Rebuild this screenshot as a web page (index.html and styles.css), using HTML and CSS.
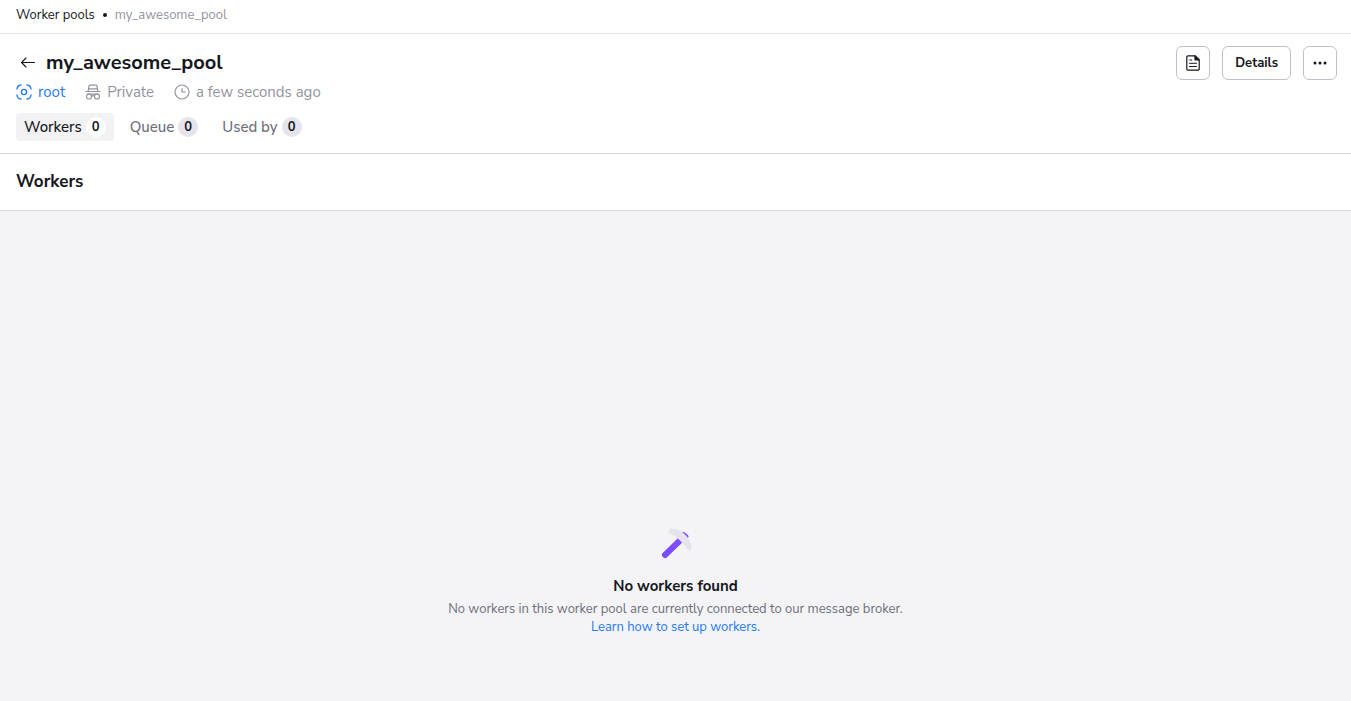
FILE: index.html
```html
<!DOCTYPE html>
<html lang="en">
<head>
    <meta charset="UTF-8">
    <meta name="viewport" content="width=device-width, initial-scale=1.0">
    <title>my_awesome_pool</title>
    <link rel="stylesheet" href="styles.css">
</head>
<body>

    <!-- Breadcrumbs -->
    <nav class="breadcrumbs" aria-label="Breadcrumbs">
        <a href="#">Worker pools</a>
        <span class="separator"></span>
        <span class="current">my_awesome_pool</span>
    </nav>

    <!-- Page header -->
    <header class="page-header">
        <div class="title-row">
            <a href="#" class="back-link" aria-label="Back">
                <svg width="16" height="12" viewBox="0 0 16 12" fill="none" stroke="currentColor" stroke-width="1.1" stroke-linecap="round" stroke-linejoin="round">
                    <path d="M14.500 5.500H1.500M6 1L1.500 5.500 6 10"/>
                </svg>
            </a>
            <h1>my_awesome_pool</h1>
            <div class="actions">
                <button type="button" class="btn btn-icon" aria-label="Documentation">
                    <svg width="14" height="16" viewBox="0 0 14 16" fill="none" stroke="currentColor" stroke-width="1.2" stroke-linejoin="round">
                        <path d="M8.500.8H2A1.200 1.200 0 0 0 .8 2v12A1.200 1.200 0 0 0 2 15.200h10a1.200 1.200 0 0 0 1.200-1.200V5.200z"/>
                        <path d="M9 .8v4h4.200z" fill="currentColor"/>
                        <path d="M3.800 5h2M3.500 8.300h7M3.500 11.500h7" stroke-width="1" stroke-linecap="round"/>
                    </svg>
                </button>
                <button type="button" class="btn">Details</button>
                <button type="button" class="btn btn-icon" aria-label="More actions">
                    <svg width="14" height="4" viewBox="0 0 14 4" fill="currentColor">
                        <circle cx="2" cy="2" r="1.500"/>
                        <circle cx="7" cy="2" r="1.500"/>
                        <circle cx="12" cy="2" r="1.500"/>
                    </svg>
                </button>
            </div>
        </div>

        <div class="meta">
            <a href="#" class="meta-item space-link">
                <svg width="16" height="16" viewBox="0 0 16 16" fill="none" stroke="currentColor" stroke-width="1.3" stroke-linecap="round">
                    <circle cx="8" cy="8" r="2.600"/>
                    <path d="M1 5C1.200 2.700 2.700 1.200 5 1M11 1C13.300 1.200 14.800 2.700 15 5M15 11C14.800 13.300 13.300 14.800 11 15M5 15C2.700 14.800 1.200 13.300 1 11"/>
                </svg>
                root
            </a>
            <span class="meta-item">
                <svg width="16" height="16" viewBox="0 0 16 16" fill="none" stroke="currentColor" stroke-width="1.2" stroke-linecap="round" stroke-linejoin="round">
                    <path d="M3.200 7.200L4 2.200Q4.200 1.200 5.200 1.200h5.600q1 0 1.200 1l.8 5M3.600 4.800h8.800M1 7.500h14"/>
                    <path d="M2.500 10.200h11"/>
                    <circle cx="4" cy="12.500" r="2.500"/>
                    <circle cx="12" cy="12.500" r="2.500"/>
                    <path d="M6.500 12.200q1.500-1 3 0"/>
                </svg>
                Private
            </span>
            <span class="meta-item">
                <svg width="16" height="16" viewBox="0 0 16 16" fill="none" stroke="currentColor" stroke-width="1.200" stroke-linecap="round" stroke-linejoin="round">
                    <circle cx="8" cy="8" r="7"/>
                    <path d="M8 4.500V8h3.500"/>
                </svg>
                a few seconds ago
            </span>
        </div>

        <nav class="tabs" aria-label="Worker pool sections">
            <a href="#" class="tab active" aria-current="page">Workers <span class="count">0</span></a>
            <a href="#" class="tab">Queue <span class="count">0</span></a>
            <a href="#" class="tab">Used by <span class="count">0</span></a>
        </nav>
    </header>

    <div class="section-header">
        <h2>Workers</h2>
    </div>

    <!-- Empty state -->
    <main class="empty-state">
        <svg width="32" height="32" viewBox="0 0 32 32" fill="none">
            <path d="M5 27L20 12.500" stroke="#7c4dff" stroke-width="6" stroke-linecap="round"/>
            <path d="M23.500 6L26.500 8.500" stroke="#7c4dff" stroke-width="4" stroke-linecap="round"/>
            <path d="M10 .6C16 .2 21 2.500 25 6.500 29 10.500 31 15 32 20L29.500 23.500C26.500 19.500 23.500 16 20 12.500 16 8.500 12.500 6 7.500 4.500Z" fill="#e4e4ec"/>
        </svg>
        <h3>No workers found</h3>
        <p>No workers in this worker pool are currently connected to our message broker.</p>
        <a href="#">Learn how to set up workers.</a>
    </main>

</body>
</html>
```
FILE: styles.css
```css
* {
    box-sizing: border-box;
}

body {
    margin: 0;
    min-height: 100vh;
    display: flex;
    flex-direction: column;
    font-family: "Nunito Sans", "Open Sans", sans-serif;
    font-size: 13px;
    line-height: 18px;
    color: #16171d;
    background-color: #fff;
}

h1, h2, h3, p {
    margin: 0;
}

a {
    color: inherit;
    text-decoration: none;
}

svg {
    display: block;
    flex-shrink: 0;
}

/* Breadcrumbs */
.breadcrumbs {
    display: flex;
    align-items: center;
    gap: 8px;
    padding: 6px 16px 9px;
    border-bottom: 1px solid #e6e6ea;
}

.separator {
    width: 4px;
    height: 4px;
    border-radius: 50%;
    background-color: #16171d;
}

.current {
    color: #92939e;
}

/* Page header */
.page-header {
    padding: 12px 14px 12px 16px;
    border-bottom: 1px solid #d8d8dd;
}

.title-row {
    display: flex;
    align-items: center;
}

.back-link {
    padding: 4px 10px 4px 4px;
}

h1 {
    font-size: 20px;
    line-height: 28px;
    font-weight: 700;
}

.actions {
    display: flex;
    gap: 12px;
    margin-left: auto;
}

.btn {
    display: flex;
    align-items: center;
    justify-content: center;
    height: 34px;
    padding: 0 12px;
    border: 1px solid #bfc0ca;
    border-radius: 6px;
    background-color: #fff;
    color: #16171d;
    font-family: inherit;
    font-size: 13px;
    font-weight: 700;
    cursor: pointer;
}

.btn-icon {
    width: 34px;
    padding: 0;
}

.meta {
    display: flex;
    gap: 20px;
    margin-top: 2px;
    font-size: 15px;
    line-height: 20px;
    color: #92939e;
}

.meta-item {
    display: flex;
    align-items: center;
    gap: 6px;
}

.space-link {
    color: #1f7af5;
}

/* Tabs */
.tabs {
    display: flex;
    gap: 8px;
    margin-top: 11px;
}

.tab {
    display: flex;
    align-items: center;
    gap: 4px;
    height: 28px;
    padding: 0 8px;
    border-radius: 4px;
    font-size: 15px;
    font-weight: 500;
    color: #6d6f7b;
}

.tab.active {
    background-color: #f2f2f5;
    color: #16171d;
}

.count {
    width: 20px;
    height: 20px;
    border-radius: 50%;
    background-color: #e4e4ed;
    color: #16171d;
    font-size: 13px;
    line-height: 20px;
    font-weight: 700;
    text-align: center;
}

.active .count {
    background-color: #fff;
}

.section-header {
    padding: 16px;
    border-bottom: 1px solid #d8d8dd;
}

h2 {
    font-size: 17px;
    line-height: 24px;
    font-weight: 700;
}

/* Empty state */
.empty-state {
    flex: 1;
    display: flex;
    flex-direction: column;
    align-items: center;
    padding: 317px 16px 24px;
    background-color: #f4f4f7;
    text-align: center;
}

.empty-state h3 {
    margin: 16px 0 4px;
    font-size: 15px;
    line-height: 20px;
    font-weight: 700;
}

.empty-state p {
    color: #6d6f7b;
}

.empty-state a {
    color: #1f7af5;
}
```
